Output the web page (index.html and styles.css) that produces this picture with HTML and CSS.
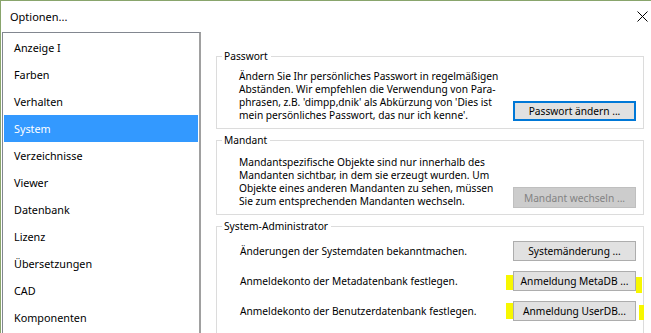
FILE: index.html
```html
<!DOCTYPE html>
<html lang="de">
<head>
<meta charset="utf-8">
<title>Optionen...</title>
<link rel="stylesheet" href="styles.css">
</head>
<body>
<div class="window">
  <div class="titlebar">
    <span class="title">Optionen...</span>
    <svg class="close" width="11" height="11" viewBox="0 0 11 11"><path d="M0.5 0.5 L10.5 10.5 M10.5 0.5 L0.5 10.5" stroke="#000" stroke-width="1" fill="none"/></svg>
  </div>
  <div class="main">
    <ul class="listbox">
      <li>Anzeige I</li>
      <li>Farben</li>
      <li>Verhalten</li>
      <li class="selected">System</li>
      <li>Verzeichnisse</li>
      <li>Viewer</li>
      <li>Datenbank</li>
      <li>Lizenz</li>
      <li>Übersetzungen</li>
      <li>CAD</li>
      <li>Komponenten</li>
    </ul>
    <div class="content">
      <fieldset class="group group-pw">
        <legend>Passwort</legend>
        <div class="row">
          <p class="desc">Ändern Sie Ihr persönliches Passwort in regelmäßigen<br>Abständen. Wir empfehlen die Verwendung von Para-<br>phrasen, z.B. 'dimpp,dnik' als Abkürzung von 'Dies ist<br>mein persönliches Passwort, das nur ich kenne'.</p>
          <button class="btn btn-focus">Passwort ändern ...</button>
        </div>
      </fieldset>
      <fieldset class="group group-md">
        <legend>Mandant</legend>
        <div class="row">
          <p class="desc">Mandantspezifische Objekte sind nur innerhalb des<br>Mandanten sichtbar, in dem sie erzeugt wurden. Um<br>Objekte eines anderen Mandanten zu sehen, müssen<br>Sie zum entsprechenden Mandanten wechseln.</p>
          <button class="btn btn-disabled" disabled>Mandant wechseln ...</button>
        </div>
      </fieldset>
      <fieldset class="group group-sa">
        <legend>System-Administrator</legend>
        <div class="sa-row">
          <span class="label">Änderungen der Systemdaten bekanntmachen.</span>
          <button class="btn">Systemänderung ...</button>
        </div>
        <div class="sa-row">
          <span class="label">Anmeldekonto der Metadatenbank festlegen.</span>
          <span class="marked">
            <span class="hl hl-l1"></span>
            <button class="btn">Anmeldung MetaDB ...</button>
            <span class="hl hl-r1"></span>
          </span>
        </div>
        <div class="sa-row">
          <span class="label">Anmeldekonto der Benutzerdatenbank festlegen.</span>
          <span class="marked">
            <span class="hl hl-l2"></span>
            <button class="btn">Anmeldung UserDB...</button>
            <span class="hl hl-r2"></span>
          </span>
        </div>
      </fieldset>
    </div>
  </div>
</div>
</body>
</html>
```

FILE: styles.css
```css
* { box-sizing: border-box; }
html, body { margin: 0; padding: 0; background: #fff; }
body {
  font-family: "Noto Sans", "Open Sans", sans-serif;
  font-size: 10.2px;
  color: #000;
}
.window {
  width: 651px;
  height: 333px;
  overflow: hidden;
  background: #fff;
  border-top: 1px solid #89a56c;
  border-left: 1px solid #89a56c;
  display: flex;
  flex-direction: column;
}
.titlebar {
  height: 31px;
  flex: none;
  display: flex;
  align-items: center;
  justify-content: space-between;
  padding: 0 3px 0 9px;
}
.title { font-size: 11px; line-height: 16px; }
.close { margin-top: -1px; }
.main {
  flex: 1;
  display: flex;
  align-items: flex-start;
  min-height: 0;
}
.listbox {
  list-style: none;
  margin: 0 0 0 1px;
  padding: 1px;
  width: 199px;
  height: 320px;
  border: 1px solid #828790;
  border-right: 2px solid #a0a0a0;
  flex: none;
  font-size: 10.8px;
}
.listbox li {
  height: 27px;
  line-height: 27px;
  padding-left: 10px;
}
.listbox li.selected { background: #3399ff; color: #fff; }
.content {
  flex: 1;
  padding: 17px 7px 0 15px;
  display: flex;
  flex-direction: column;
}
.group {
  margin: 0;
  border: 1px solid #dcdcdc;
  padding: 0 7px 6px 22px;
  min-width: 0;
}
.group legend {
  padding: 0 3px 0 2px;
  margin-left: -17px;
  line-height: 14px;
}
.group-pw { padding-top: 7px; }
.group-md { margin-top: 4px; padding-top: 9px; }
.group-sa { margin-top: 4px; padding: 3px 7px 8px 23px; }
.group-sa legend { margin-left: -18px; }
.row {
  display: flex;
  justify-content: space-between;
  align-items: flex-end;
}
.desc {
  margin: 0;
  line-height: 13px;
  white-space: nowrap;
}
.label { white-space: nowrap; }
.btn {
  width: 123px;
  height: 20px;
  padding: 0;
  font-family: inherit;
  font-size: 10.2px;
  color: #000;
  background: #e1e1e1;
  border: 1px solid #adadad;
  border-radius: 0;
  flex: none;
  white-space: nowrap;
}
.group-pw .btn { margin-bottom: 1px; }
.btn-focus {
  border: 1px solid #0078d7;
  box-shadow: inset 0 0 0 1px #0078d7;
}
.btn-disabled {
  height: 21px;
  background: #cccccc;
  border-color: #bfbfbf;
  color: #838383;
}
.sa-row {
  height: 30px;
  display: flex;
  align-items: center;
  justify-content: space-between;
}
.marked {
  position: relative;
  display: flex;
}
.hl {
  position: absolute;
  background: #f7f700;
}
.hl-l1 { left: -7px; width: 7px; top: 4px; height: 15px; }
.hl-r1 { right: -6px; width: 6px; top: 6px; height: 16px; }
.hl-l2 { left: -7px; width: 7px; top: 2px; height: 16px; }
.hl-r2 { right: -8px; width: 5px; top: 4px; height: 15px; }
```
